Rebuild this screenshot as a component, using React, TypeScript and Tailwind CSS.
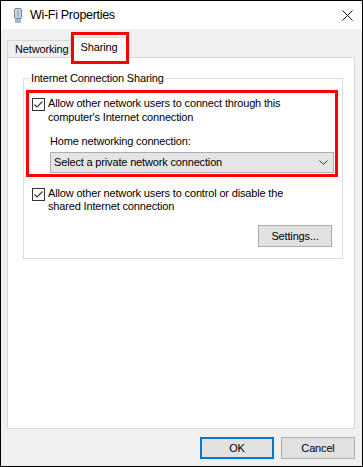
import React from "react";

const font = { fontFamily: '"Liberation Sans", Arial, sans-serif' };

function Check() {
  return (
    <svg width="13" height="13" viewBox="0 0 13 13" className="shrink-0 block">
      <rect x="0.5" y="0.5" width="12" height="12" fill="#ffffff" stroke="#333333" />
      <polyline points="2.5,6.5 5,9 10.5,3.5" fill="none" stroke="#333333" strokeWidth="1.1" />
    </svg>
  );
}

export default function App() {
  return (
    <div
      className="w-[363px] h-[467px] border border-black flex flex-col text-[11px] leading-[13px] tracking-[-0.16px] text-black bg-[#f0f0f0]"
      style={font}
    >
      {/* Title bar */}
      <div className="h-[28px] bg-white flex items-center shrink-0">
        <svg width="10" height="16" viewBox="0 0 10 16" className="ml-[12px] mt-[1px] block">
          <rect x="1.5" y="0.5" width="7" height="10" rx="1.5" fill="#c9d6e2" stroke="#6f8aa3" />
          <line x1="5" y1="2" x2="5" y2="9" stroke="#7d96ad" />
          <line x1="3" y1="11" x2="3" y2="15" stroke="#2d7fd0" />
          <line x1="5" y1="11" x2="5" y2="15" stroke="#2d7fd0" />
          <line x1="7" y1="11" x2="7" y2="15" stroke="#2d7fd0" />
        </svg>
        <span className="ml-[7px] text-[12.5px] tracking-[-0.3px]">Wi-Fi Properties</span>
        <div className="flex-1" />
        <svg width="11" height="11" viewBox="0 0 11 11" className="mr-[9px] block">
          <line x1="0.5" y1="0.5" x2="10.5" y2="10.5" stroke="#111" strokeWidth="1" />
          <line x1="10.5" y1="0.5" x2="0.5" y2="10.5" stroke="#111" strokeWidth="1" />
        </svg>
      </div>

      {/* Body */}
      <div className="flex-1 flex flex-col pt-[8px] pl-[6px] pr-[7px]">
        {/* Tabs */}
        <div className="h-[20px] flex items-end">
          <div className="h-[17px] w-[63px] border-t border-l border-[#d9d9d9] bg-[#f0f0f0] flex items-center pl-[7px]">
            Networking
          </div>
          <div className="relative z-10 h-[21px] w-[58px] -mb-[1px] bg-white border-t border-l border-r border-[#d9d9d9] flex justify-center pt-[3px]">
            Sharing
            <div className="absolute left-[0px] top-[-6px] w-[58px] h-[32px] border-[3px] border-[#ff0000]" />
          </div>
        </div>

        {/* Panel */}
        <div className="h-[372px] w-[348px] bg-white border border-[#d9d9d9] pt-[14px]">
          <fieldset className="ml-[15px] w-[320px] border border-[#dcdcdc] px-0 pb-[11px]">
            <legend className="ml-[6px] px-[1px]">Internet Connection Sharing</legend>

            <div className="ml-[2px] mt-[5px] w-[312px] border-[3px] border-[#ff0000] pb-[1px]">
              <div className="flex pt-[3px] pl-[3px] leading-[14px]">
                <div className="mt-[2px]">
                  <Check />
                </div>
                <div className="ml-[3px]">
                  Allow other network users to connect through this
                  <br />
                  computer's Internet connection
                </div>
              </div>
              <div className="ml-[21px] mt-[11px]">Home networking connection:</div>
              <div className="ml-[21px] mt-[4px] w-[284px] h-[21px] bg-[#e5e5e5] border border-[#adadad] flex items-center pl-[3px] pr-[5px]">
                <span className="flex-1">Select a private network connection</span>
                <svg width="9" height="5" viewBox="0 0 9 5" className="block">
                  <polyline points="0.5,0.5 4.5,4.5 8.5,0.5" fill="none" stroke="#333" strokeWidth="1" />
                </svg>
              </div>
            </div>

            <div className="flex pl-[8px] mt-[10px]">
              <div className="mt-[1px]">
                <Check />
              </div>
              <div className="ml-[3px]">
                Allow other network users to control or disable the
                <br />
                shared Internet connection
              </div>
            </div>

            <div className="flex justify-end pr-[10px] mt-[12px]">
              <div className="w-[74px] h-[22px] bg-[#e1e1e1] border border-[#adadad] flex items-center justify-center">
                Settings...
              </div>
            </div>
          </fieldset>
        </div>

        {/* Buttons */}
        <div className="flex justify-end gap-[7px] mt-[8px] pr-[0px]">
          <div className="w-[74px] h-[22px] bg-[#e1e1e1] border-2 border-[#0078d7] flex items-center justify-center">
            OK
          </div>
          <div className="w-[74px] h-[22px] bg-[#e1e1e1] border border-[#adadad] flex items-center justify-center">
            Cancel
          </div>
        </div>
      </div>
    </div>
  );
}
